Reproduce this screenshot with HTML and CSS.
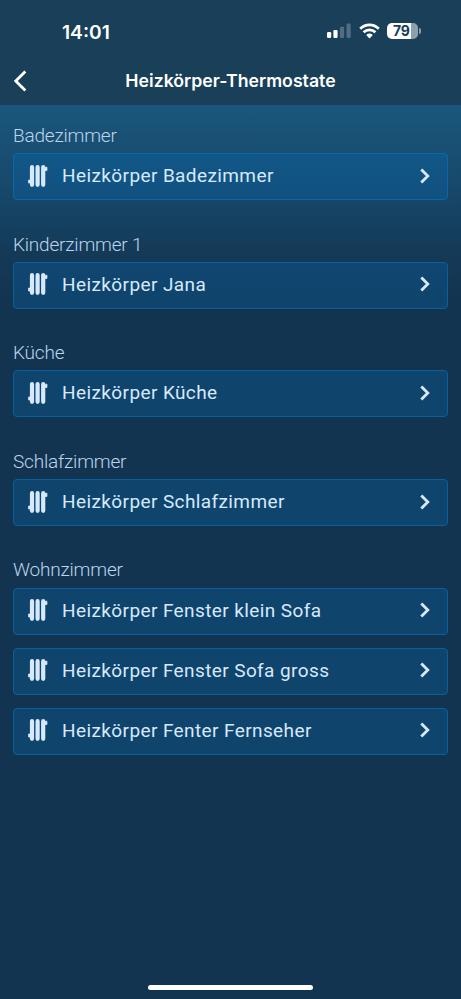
FILE: index.html
```
<!DOCTYPE html>
<html lang="de">
<head>
<meta charset="utf-8">
<meta name="viewport" content="width=device-width, initial-scale=1">
<title>Heizkörper-Thermostate</title>
<link rel="stylesheet" href="styles.css">
</head>
<body>
<svg class="defs" aria-hidden="true">
  <symbol id="radiator" viewBox="0 0 20 22">
    <path d="M4 2.2V19.8M9.6 2.2V19.8M15.2 2.2V19.8" stroke="currentColor" stroke-width="4.2" stroke-linecap="round"/>
    <path d="M.5 15H4V18H.5ZM16 2.2H19V5.5H16Z" fill="currentColor" stroke="currentColor" stroke-linejoin="round" stroke-width=".7"/>
  </symbol>
  <symbol id="chevron" viewBox="0 0 10 16">
    <path d="M1.3 1.5L7.8 8L1.3 14.5" fill="none" stroke="currentColor" stroke-width="2.8"/>
  </symbol>
</svg>
<header class="header">
  <div class="status">
    <span class="time">14:01</span>
    <div class="indicators">
      <svg class="signal" viewBox="0 0 24 16"><g fill="#fff"><rect y="9" width="4.2" height="6" rx="1.2"/><rect x="6.4" y="7" width="4.2" height="8" rx="1.2"/><g opacity=".24"><rect x="12.9" y="3.7" width="4.2" height="11.3" rx="1.2"/><rect x="19.5" y=".5" width="4.2" height="14.5" rx="1.2"/></g></g></svg>
      <svg class="wifi" viewBox="0 0 21 16"><g fill="none" stroke="#fff" stroke-width="2.7"><path d="M1.2 5.8C6.4 .6 14.6 .6 19.8 5.8"/><path d="M4.6 9.3C7.9 6 13.1 6 16.4 9.3"/></g><path d="M7.2 12Q10.5 9.1 13.8 12L10.5 15.4Z" fill="#fff"/></svg>
      <div class="battery"><span class="level">79</span></div>
    </div>
  </div>
  <nav class="nav">
    <svg class="back" viewBox="0 0 13 22"><path d="M11.3 1.5L1.8 11L11.3 20.5" fill="none" stroke="#fff" stroke-width="2.8"/></svg>
    <h1 class="title">Heizkörper-Thermostate</h1>
  </nav>
</header>
<main class="content">
  <section class="room"><h2 class="label">Badezimmer</h2>
    <div class="row"><svg class="radiator"><use href="#radiator"/></svg><span class="name">Heizkörper Badezimmer</span><svg class="chevron"><use href="#chevron"/></svg></div>
  </section>
  <section class="room"><h2 class="label">Kinderzimmer 1</h2>
    <div class="row"><svg class="radiator"><use href="#radiator"/></svg><span class="name">Heizkörper Jana</span><svg class="chevron"><use href="#chevron"/></svg></div>
  </section>
  <section class="room"><h2 class="label">Küche</h2>
    <div class="row"><svg class="radiator"><use href="#radiator"/></svg><span class="name">Heizkörper Küche</span><svg class="chevron"><use href="#chevron"/></svg></div>
  </section>
  <section class="room"><h2 class="label">Schlafzimmer</h2>
    <div class="row"><svg class="radiator"><use href="#radiator"/></svg><span class="name">Heizkörper Schlafzimmer</span><svg class="chevron"><use href="#chevron"/></svg></div>
  </section>
  <section class="room"><h2 class="label">Wohnzimmer</h2>
    <div class="row"><svg class="radiator"><use href="#radiator"/></svg><span class="name">Heizkörper Fenster klein Sofa</span><svg class="chevron"><use href="#chevron"/></svg></div>
    <div class="row"><svg class="radiator"><use href="#radiator"/></svg><span class="name">Heizkörper Fenster Sofa gross</span><svg class="chevron"><use href="#chevron"/></svg></div>
    <div class="row"><svg class="radiator"><use href="#radiator"/></svg><span class="name">Heizkörper Fenter Fernseher</span><svg class="chevron"><use href="#chevron"/></svg></div>
  </section>
</main>
<footer class="footer"><div class="home"></div></footer>
</body>
</html>
```
FILE: styles.css
```
* { box-sizing: border-box; }
body {
  margin: 0;
  height: 999px;
  display: flex;
  flex-direction: column;
  background: #133450;
  font-family: Inter, sans-serif;
  color: #fff;
  overflow: hidden;
}
.defs { display: none; }
.header { height: 105px; background: #193f59; flex: none; }
.status {
  height: 62px;
  display: flex;
  justify-content: space-between;
  padding: 0 43px 0 62px;
}
.time { font-size: 19.2px; font-weight: 600; line-height: 24px; margin-top: 20px; }
.indicators { display: flex; align-items: flex-start; padding-top: 23px; }
.signal { width: 24px; height: 16px; margin-right: 8px; }
.wifi { width: 21px; height: 16px; margin-right: 7px; }
.battery {
  position: relative;
  width: 31px;
  height: 16px;
  border-radius: 5px;
  background: linear-gradient(90deg, #fff 79%, #8da0ad 79%);
}
.battery::after {
  content: "";
  position: absolute;
  right: -3px;
  top: 5px;
  width: 2px;
  height: 6px;
  border-radius: 0 2px 2px 0;
  background: #8da0ad;
}
.level { display: block; padding-left: 6px; font-size: 14px; line-height: 16px; font-weight: 700; letter-spacing: -.3px; color: #193f59; }
.nav {
  height: 38px;
  display: grid;
  grid-template-columns: 40px 1fr 40px;
  align-items: center;
}
.back { width: 13px; height: 22px; margin-left: 14px; }
.title { margin: 0; font-size: 17.7px; line-height: 24px; font-weight: 600; text-align: center; white-space: nowrap; }
.content {
  flex: 1;
  padding: 18px 13px 0;
  background: linear-gradient(#1a567b 0, #174a6d 75px, #143a58 145px, #133450 195px);
}
.label {
  margin: 0 0 4.3px;
  font: 300 19px/26px Roboto, sans-serif;
  letter-spacing: -.2px;
  color: #bcd5ed;
}
.room { margin-bottom: 31.3px; }
.row {
  height: 47px;
  display: flex;
  align-items: center;
  padding: 0 17px 2px 14px;
  border: 1px solid #08609f;
  border-radius: 4px;
  background: rgba(11, 84, 138, .5);
  color: #d7e9fc;
}
.room:first-child .row { background: linear-gradient(#115787, #115180); border-color: #0b68a8; }
.row + .row { margin-top: 13px; }
.radiator { width: 20px; height: 22px; margin-right: 14px; flex: none; }
.name { flex: 1; padding-top: 1px; font: 400 19px/26px Roboto, sans-serif; letter-spacing: .4px; white-space: nowrap; }
.chevron { width: 10px; height: 16px; flex: none; }
.footer { height: 14px; flex: none; display: flex; justify-content: center; }
.home { width: 165px; height: 5px; border-radius: 3px; background: #fff; }
```
